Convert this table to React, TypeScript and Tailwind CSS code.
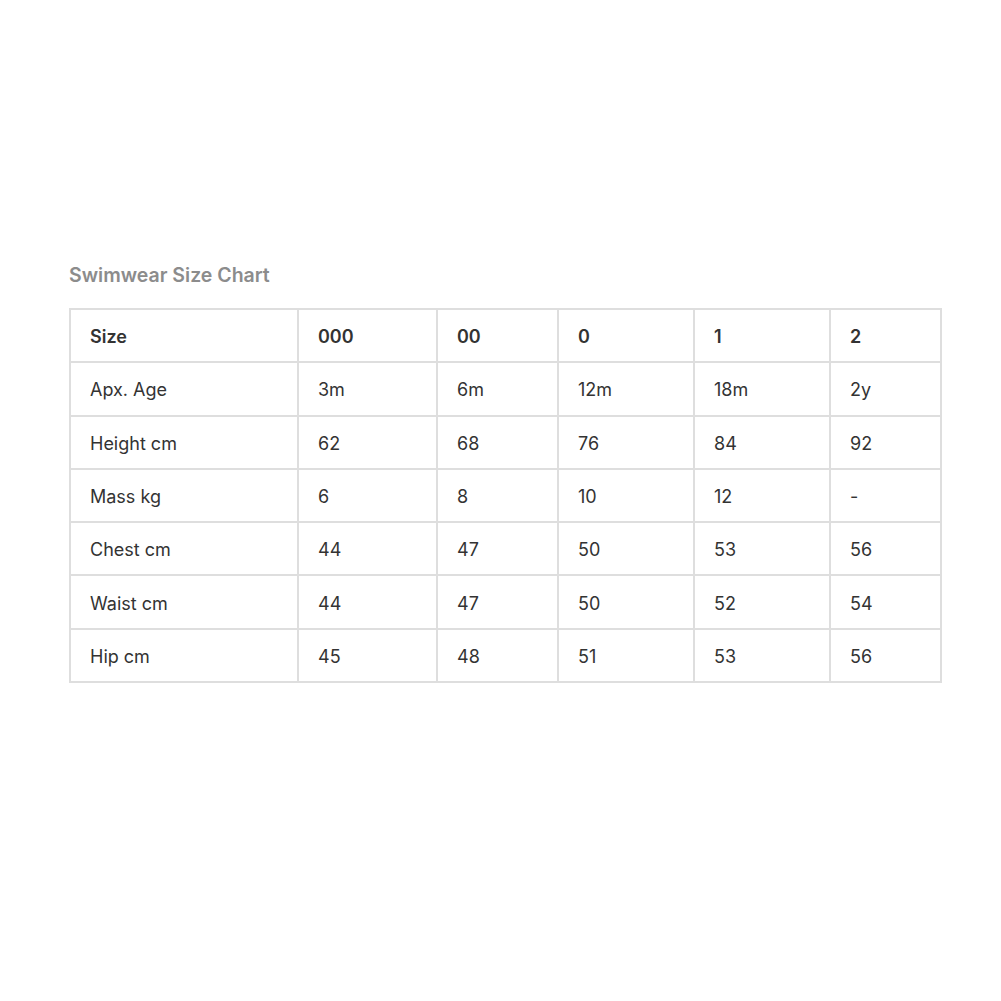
const header = ["Size", "000", "00", "0", "1", "2"];

const rows: string[][] = [
  ["Apx. Age", "3m", "6m", "12m", "18m", "2y"],
  ["Height cm", "62", "68", "76", "84", "92"],
  ["Mass kg", "6", "8", "10", "12", "-"],
  ["Chest cm", "44", "47", "50", "53", "56"],
  ["Waist cm", "44", "47", "50", "52", "54"],
  ["Hip cm", "45", "48", "51", "53", "56"],
];

const widths = ["w-[228px]", "w-[139px]", "w-[121px]", "w-[136px]", "w-[136px]", "w-[111px]"];

export default function App() {
  return (
    <div className="min-h-[1001px] bg-white pl-[69px] pt-[261px] font-['Inter',sans-serif]">
      <h2 className="mb-[19px] text-[19.5px] leading-[28px] font-semibold text-[#8c8c8c]">
        Swimwear Size Chart
      </h2>
      <table className="w-[871px] table-fixed border-collapse text-[18px] text-[#333]">
        <colgroup>
          {widths.map((w, i) => (
            <col key={i} className={w} />
          ))}
        </colgroup>
        <thead>
          <tr>
            {header.map((h) => (
              <th
                key={h}
                className="h-[53.3px] border-2 border-[#dedede] px-[19px] pt-[2px] text-left font-semibold"
              >
                {h}
              </th>
            ))}
          </tr>
        </thead>
        <tbody>
          {rows.map((r) => (
            <tr key={r[0]}>
              {r.map((c, i) => (
                <td
                  key={i}
                  className="h-[53.3px] border-2 border-[#dedede] px-[19px] pt-[2px] font-normal"
                >
                  {c}
                </td>
              ))}
            </tr>
          ))}
        </tbody>
      </table>
    </div>
  );
}
